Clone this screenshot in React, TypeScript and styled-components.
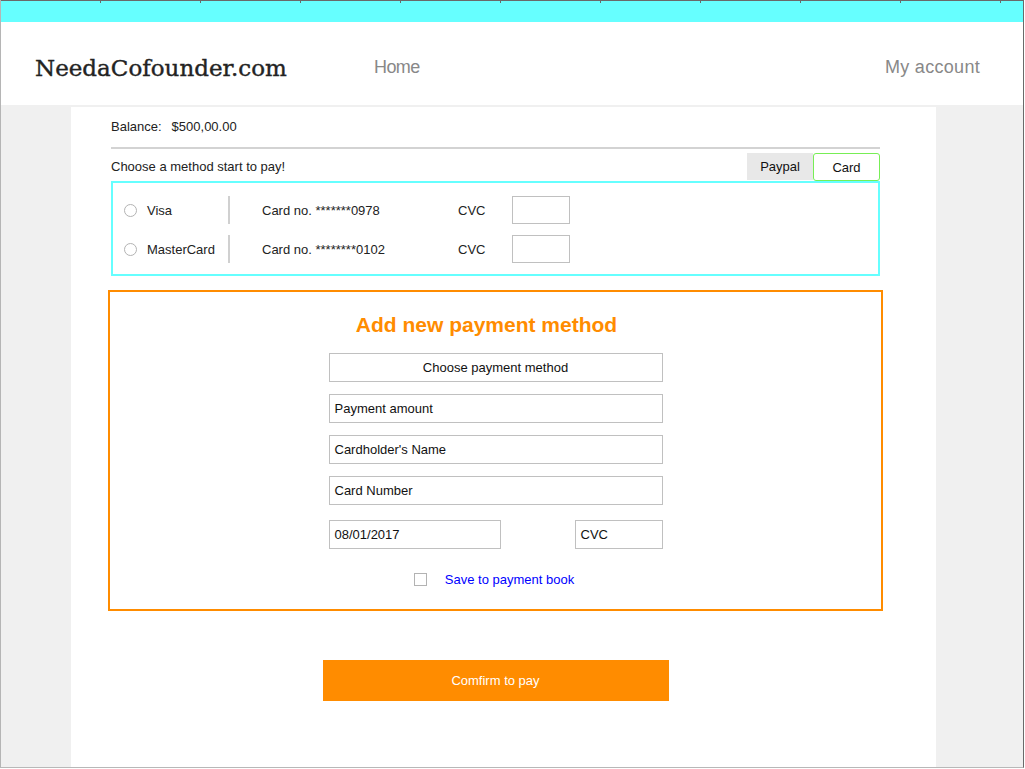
import React from "react";
import styled, { createGlobalStyle } from "styled-components";

const Global = createGlobalStyle`
  html, body { margin: 0; padding: 0; background: #ffffff; }
  body { font-family: "Liberation Sans", Arial, sans-serif; color: #222; }
  * { box-sizing: border-box; }
`;

const Frame = styled.div`
  width: 1024px;
  height: 768px;
  border-left: 1px solid #b5b5b5;
  border-right: 1px solid #6a6a6a;
  border-bottom: 1px solid #b8b8b8;
  display: flex;
  flex-direction: column;
  background: #f0f0f0;
  overflow: hidden;
`;

const TopBar = styled.div`
  height: 22px;
  flex: none;
  background: #66ffff;
  border-top: 1px solid #6a6a6a;
  position: relative;
  &::before {
    content: "";
    position: absolute;
    left: 0;
    right: 0;
    top: 0;
    height: 2px;
    background: repeating-linear-gradient(
      to right,
      transparent 0px,
      transparent 99px,
      #6a6a6a 99px,
      #6a6a6a 100px
    );
  }
`;

const Header = styled.header`
  height: 83px;
  flex: none;
  background: #fff;
  display: flex;
  align-items: center;
  padding: 8px 43px 0 34px;
`;

const Logo = styled.div`
  font-family: "DejaVu Serif", "Liberation Serif", serif;
  font-size: 23px;
  font-weight: normal;
  -webkit-text-stroke: 0.4px #232323;
  color: #232323;
  width: 339px;
`;

const NavLink = styled.a<{ $right?: boolean }>`
  font-family: "Liberation Sans", Arial, sans-serif;
  font-size: 18px;
  color: #888;
  text-decoration: none;
  margin-left: ${(p) => (p.$right ? "auto" : "0")};
  letter-spacing: ${(p) => (p.$right ? "0.3px" : "-0.6px")};
`;

const Body = styled.main`
  flex: 1;
  display: flex;
  padding: 2px 0 0 70px;
`;

const Column = styled.div`
  width: 865px;
  background: #fff;
  padding: 12px 56px 0 40px;
  display: flex;
  flex-direction: column;
`;

const Balance = styled.div`
  font-size: 13px;
  line-height: 16px;
  display: flex;
  gap: 10px;
  padding-bottom: 12px;
  border-bottom: 2px solid #d3d3d3;
`;

const MethodBar = styled.div`
  height: 32px;
  display: flex;
  align-items: flex-end;
`;

const MethodLabel = styled.div`
  font-size: 13px;
  line-height: 16px;
  align-self: center;
  margin-right: auto;
  padding-top: 3px;
`;

const Tab = styled.div<{ $active?: boolean }>`
  width: ${(p) => (p.$active ? "67px" : "66px")};
  height: ${(p) => (p.$active ? "28px" : "27px")};
  margin-bottom: ${(p) => (p.$active ? "0" : "1px")};
  display: flex;
  align-items: center;
  justify-content: center;
  font-size: 13px;
  color: #111;
  background: ${(p) => (p.$active ? "#fff" : "#e8e8e8")};
  border: ${(p) => (p.$active ? "1px solid #77ee55" : "none")};
  border-radius: ${(p) => (p.$active ? "3px" : "0")};
`;

const SavedBox = styled.div`
  border: 2px solid #66ffff;
  padding: 13px 11px 11px;
  display: flex;
  flex-direction: column;
  gap: 11px;
`;

const SavedRow = styled.div`
  display: grid;
  grid-template-columns: 13px 91px 2px 228px 54px 58px;
  align-items: center;
  height: 28px;
  font-size: 13px;
`;

const Radio = styled.span`
  width: 13px;
  height: 13px;
  border-radius: 50%;
  border: 1px solid #b3b3b3;
  background: #fff;
`;

const CardName = styled.span`
  padding-left: 10px;
`;

const Divider = styled.span`
  width: 2px;
  height: 28px;
  background: #d0d0d0;
`;

const CardNo = styled.span`
  padding-left: 32px;
`;

const SmallInput = styled.div`
  width: 58px;
  height: 28px;
  border: 1px solid #c0c0c0;
`;

const AddBox = styled.section`
  margin: 14px -3px 0;
  border: 2px solid #ff8c00;
  padding: 21px 0 21px;
  display: flex;
  flex-direction: column;
  align-items: center;
`;

const Title = styled.h2`
  margin: 0 18px 16px 0;
  font-size: 21px;
  line-height: 24px;
  font-weight: bold;
  color: #ff8c00;
`;

const Form = styled.div`
  width: 334px;
  display: flex;
  flex-direction: column;
  gap: 12px;
`;

const Field = styled.div<{ $center?: boolean; $w?: string }>`
  width: ${(p) => p.$w || "100%"};
  height: 29px;
  border: 1px solid #c0c0c0;
  font-size: 13px;
  color: #111;
  display: flex;
  align-items: center;
  justify-content: ${(p) => (p.$center ? "center" : "flex-start")};
  padding-left: ${(p) => (p.$center ? "0" : "5px")};
`;

const SplitRow = styled.div`
  display: flex;
  justify-content: space-between;
  margin-top: 3px;
`;

const SaveRow = styled.label`
  display: flex;
  align-items: center;
  justify-content: center;
  gap: 18px;
  margin-top: 23px;
  margin-bottom: 1px;
  font-size: 13px;
  color: #0000ff;
  margin-right: 3px;
`;

const Check = styled.span`
  width: 13px;
  height: 13px;
  border: 1px solid #b3b3b3;
  background: #fff;
`;

const ConfirmWrap = styled.div`
  display: flex;
  justify-content: center;
  margin-top: 49px;
`;

const Confirm = styled.button`
  width: 346px;
  height: 41px;
  border: none;
  background: #ff8c00;
  color: #fff;
  font-family: "Liberation Sans", Arial, sans-serif;
  font-size: 13px;
  padding: 0;
`;

const cards = [
  { name: "Visa", no: "Card no. *******0978" },
  { name: "MasterCard", no: "Card no. ********0102" },
];

export default function App() {
  return (
    <>
      <Global />
      <Frame>
        <TopBar />
        <Header>
          <Logo>NeedaCofounder.com</Logo>
          <NavLink>Home</NavLink>
          <NavLink $right>My account</NavLink>
        </Header>
        <Body>
          <Column>
            <Balance>
              <span>Balance:</span>
              <span>$500,00.00</span>
            </Balance>
            <MethodBar>
              <MethodLabel>Choose a method start to pay!</MethodLabel>
              <Tab>Paypal</Tab>
              <Tab $active>Card</Tab>
            </MethodBar>
            <SavedBox>
              {cards.map((c) => (
                <SavedRow key={c.name}>
                  <Radio />
                  <CardName>{c.name}</CardName>
                  <Divider />
                  <CardNo>{c.no}</CardNo>
                  <span>CVC</span>
                  <SmallInput />
                </SavedRow>
              ))}
            </SavedBox>
            <AddBox>
              <Title>Add new payment method</Title>
              <Form>
                <Field $center>Choose payment method</Field>
                <Field>Payment amount</Field>
                <Field>Cardholder's Name</Field>
                <Field>Card Number</Field>
                <SplitRow>
                  <Field $w="172px">08/01/2017</Field>
                  <Field $w="88px">CVC</Field>
                </SplitRow>
              </Form>
              <SaveRow>
                <Check />
                <span>Save to payment book</span>
              </SaveRow>
            </AddBox>
            <ConfirmWrap>
              <Confirm>Comfirm to pay</Confirm>
            </ConfirmWrap>
          </Column>
        </Body>
      </Frame>
    </>
  );
}
